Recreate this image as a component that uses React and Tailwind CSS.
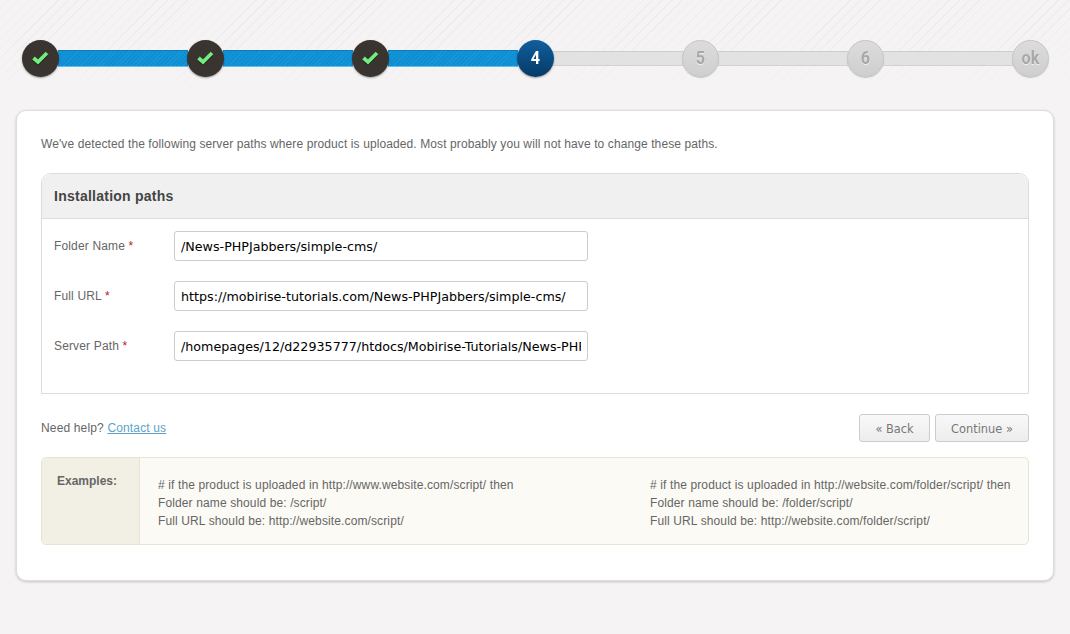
const Check = () => (
  <svg width="17" height="14" viewBox="0 0 17 14" className="-mt-px drop-shadow-[0_1px_0_rgba(0,0,0,0.5)]">
    <path d="M1.5 7 L6 11 L15 2" fill="none" stroke="#71ee7e" strokeWidth="3.7" />
  </svg>
);

const Step = ({ state, label }) => {
  if (state === 'done') {
    return (
      <div className="relative z-10 flex h-[37px] w-[37px] shrink-0 items-center justify-center rounded-full bg-[#39342f] shadow-[0_1px_2px_rgba(0,0,0,0.35)]">
        <Check />
      </div>
    );
  }
  if (state === 'active') {
    return (
      <div className="relative z-10 flex h-[37px] w-[37px] shrink-0 items-center justify-center rounded-full bg-gradient-to-b from-[#0f5f9e] to-[#063a68] font-['Roboto'] text-[19px] font-bold text-white shadow-[0_1px_2px_rgba(0,0,0,0.35)]">
        <span className="inline-block scale-x-[0.85]">{label}</span>
      </div>
    );
  }
  return (
    <div className="relative z-10 flex h-[37px] w-[37px] shrink-0 items-center justify-center rounded-full border border-[#c6c5c5] bg-gradient-to-b from-[#dddcdc] to-[#d0cfcf] font-['Roboto'] text-[19px] font-bold text-[#a9a8a8] shadow-[0_1px_1px_rgba(0,0,0,0.2)] [text-shadow:0_1px_0_#eee]">
      <span className="inline-block scale-x-[0.85]">{label}</span>
    </div>
  );
};

const Bar = ({ done }) =>
  done ? (
    <div className="-mx-px h-[17px] flex-1 border-t border-b border-t-[#0a7cbd] border-b-[#62bdea] bg-[#0f8fd3] bg-[repeating-linear-gradient(135deg,#0f8fd3_0px,#0f8fd3_2px,#1896d8_2px,#1896d8_3px)]" />
  ) : (
    <div className="-mx-px h-[15px] flex-1 border-t border-b border-t-[#cdcdcd] border-b-[#d2d2d2] bg-[#e2e2e2]" />
  );

const Field = ({ label, value }) => (
  <div className="flex items-center">
    <label className="w-[120px] text-[12px] tracking-[0.15px] text-[#666]">
      {label} <span className="text-[#c0141c]">*</span>
    </label>
    <input
      readOnly
      value={value}
      className="h-[30px] w-[414px] rounded-[3px] border border-[#ccc] bg-white px-[6px] font-['DejaVu_Sans'] text-[12.7px] text-black outline-none"
    />
  </div>
);

const ExampleColumn = ({ lines, className }) => (
  <div className={className}>
    {lines.map((line) => (
      <p key={line} className="h-[18px] leading-[18px]">{line}</p>
    ))}
  </div>
);

export default function App() {
  return (
    <div className="min-h-[634px] bg-[#f5f3f4] bg-[repeating-linear-gradient(135deg,#f5f3f4_0px,#f5f3f4_6px,#eeeced_6px,#eeeced_7px)] font-['Liberation_Sans',sans-serif]">
      <div className="h-[634px] bg-gradient-to-b from-transparent from-[30px] to-[#f5f3f4] to-[100px] pt-[40px]">
        {/* Steps */}
        <div className="flex items-center pl-[22px] pr-[21px]">
          <Step state="done" />
          <Bar done />
          <Step state="done" />
          <Bar done />
          <Step state="done" />
          <Bar done />
          <Step state="active" label="4" />
          <Bar />
          <Step label="5" />
          <Bar />
          <Step label="6" />
          <Bar />
          <Step label="ok" />
        </div>

        {/* Card */}
        <div className="mx-[16px] mt-[33px] h-[471px] rounded-[10px] border border-[#dedede] bg-white px-[24px] pt-[25px] shadow-[0_1px_3px_rgba(0,0,0,0.2)]">
          <p className="h-[16px] text-[12px] leading-[16px] tracking-[0.1px] text-[#666]">
            We've detected the following server paths where product is uploaded. Most probably you will not have to change these paths.
          </p>

          <div className="mt-[21px] h-[221px] rounded-t-[10px] border border-[#dcdcdc]">
            <div className="flex h-[45px] items-center rounded-t-[10px] border-b border-[#dcdcdc] bg-[#f0f0f0] px-[12px] text-[14px] font-bold tracking-[0.25px] text-[#444]">
              Installation paths
            </div>
            <div className="flex flex-col gap-[20px] px-[12px] pt-[12px]">
              <Field label="Folder Name" value="/News-PHPJabbers/simple-cms/" />
              <Field label="Full URL" value="https://mobirise-tutorials.com/News-PHPJabbers/simple-cms/" />
              <Field label="Server Path" value="/homepages/12/d22935777/htdocs/Mobirise-Tutorials/News-PHPJabbers/simple-cms/" />
            </div>
          </div>

          <div className="mt-[20px] flex items-center justify-between">
            <p className="text-[12px] tracking-[0.15px] text-[#666]">
              Need help? <a href="#" className="text-[#5ba5c9] underline">Contact us</a>
            </p>
            <div className="flex gap-[5px]">
              <button className="h-[28px] w-[71px] rounded-[3px] border border-[#ccc] bg-gradient-to-b from-[#f8f8f8] to-[#eeeded] pt-[4px] font-['DejaVu_Sans'] text-[11.4px] text-[#777]">
                « Back
              </button>
              <button className="h-[28px] w-[94px] rounded-[3px] border border-[#ccc] bg-gradient-to-b from-[#f8f8f8] to-[#eeeded] pt-[4px] font-['DejaVu_Sans'] text-[11.4px] text-[#777]">
                Continue »
              </button>
            </div>
          </div>

          <div className="mt-[15px] flex h-[88px] rounded-[5px] border border-[#e6e4d4] bg-[#fbfaf4] text-[12px] tracking-[0.12px] text-[#666]">
            <div className="w-[98px] rounded-l-[5px] border-r border-[#e6e4d4] bg-[#f2f0e4] pl-[15px] pt-[15px] font-bold leading-[16px] tracking-normal">
              Examples:
            </div>
            <div className="flex flex-1 pl-[18px] pt-[18px]">
              <ExampleColumn
                className="w-[492px]"
                lines={[
                  '# if the product is uploaded in http://www.website.com/script/ then',
                  'Folder name should be: /script/',
                  'Full URL should be: http://website.com/script/',
                ]}
              />
              <ExampleColumn
                lines={[
                  '# if the product is uploaded in http://website.com/folder/script/ then',
                  'Folder name should be: /folder/script/',
                  'Full URL should be: http://website.com/folder/script/',
                ]}
              />
            </div>
          </div>
        </div>
      </div>
    </div>
  );
}
